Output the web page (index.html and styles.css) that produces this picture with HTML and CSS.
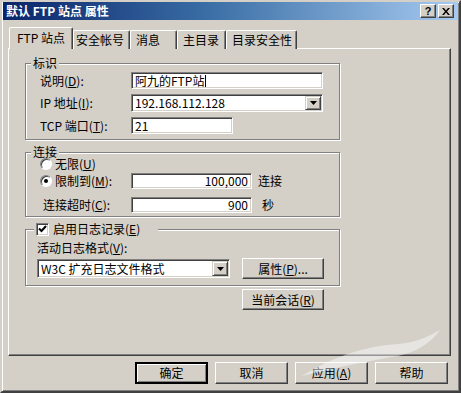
FILE: index.html
```html
<!DOCTYPE html>
<html lang="zh-CN">
<head>
  <meta charset="UTF-8" />
  <title>默认 FTP 站点 属性</title>
  <link rel="stylesheet" href="styles.css">
</head>
<body>
  <div class="window">
    <div class="titlebar">
      <span class="title">默认 FTP 站点 属性</span>
      <div class="caption-btns">
        <span class="cap-btn help">?</span>
        <span class="cap-btn">
          <svg width="8" height="7" viewBox="0 0 8 7"><path d="M0 0h2l2 2.5 2-2.5h2l-3 3.5 3 3.5h-2l-2-2.5-2 2.5h-2l3-3.5z" fill="#000"/></svg>
        </span>
      </div>
    </div>

    <div class="tabs">
      <span class="tab active">FTP 站点</span>
      <span class="tab t2">安全帐号</span>
      <span class="tab t3">消息</span>
      <span class="tab t4">主目录</span>
      <span class="tab t5">目录安全性</span>
    </div>

    <div class="panel">
      <div class="group g-ident">
        <div class="legend">标识</div>
        <div class="row r1">
          <span class="label">说明(<u>D</u>):</span>
          <div class="field w-long">阿九的FTP站<span class="caret"></span></div>
        </div>
        <div class="row r2">
          <span class="label">IP 地址(<u>I</u>):</span>
          <div class="field combo w-long">192.168.112.128<span class="drop-btn"><svg width="7" height="4" viewBox="0 0 7 4"><path d="M0 0h7l-3.5 4z" fill="#000"/></svg></span></div>
        </div>
        <div class="row r2">
          <span class="label">TCP 端口(<u>T</u>):</span>
          <div class="field w-port">21</div>
        </div>
      </div>

      <div class="group g-conn">
        <div class="legend">连接</div>
        <div class="row c1">
          <span class="radio"></span>
          <span>无限(<u>U</u>)</span>
        </div>
        <div class="row c2">
          <span class="label radio-label"><span class="radio on"><span class="dot"></span></span><span>限制到(<u>M</u>):</span></span>
          <div class="field num">100,000</div>
          <span class="unit">连接</span>
        </div>
        <div class="row c3">
          <span class="label timeout">连接超时(<u>C</u>):</span>
          <div class="field num">900</div>
          <span class="unit sec">秒</span>
        </div>
      </div>

      <div class="group g-log">
        <div class="legend check-legend">
          <span class="checkbox"><svg width="9" height="8" viewBox="0 0 9 8"><path d="M1 3.5l2.5 2.5 4.5-5" stroke="#000" stroke-width="2" fill="none"/></svg></span>
          <span>启用日志记录(<u>E</u>)</span>
        </div>
        <div class="row l1">活动日志格式(<u>V</u>):</div>
        <div class="row l2">
          <div class="field combo w-log">W3C 扩充日志文件格式<span class="drop-btn"><svg width="7" height="4" viewBox="0 0 7 4"><path d="M0 0h7l-3.5 4z" fill="#000"/></svg></span></div>
          <span class="btn side-btn">属性(<u>P</u>)...</span>
        </div>
      </div>

      <span class="btn side-btn session">当前会话(<u>R</u>)</span>
    </div>

    <div class="footer">
      <span class="btn default">确定</span>
      <span class="btn">取消</span>
      <span class="btn">应用(<u>A</u>)</span>
      <span class="btn">帮助</span>
    </div>

    <!-- faint site watermark swoosh over the dialog -->
    <svg class="watermark" width="150" height="60" viewBox="0 0 150 60">
      <path d="M4 52 C40 30 70 22 100 20 C115 19 128 14 142 6 C132 20 118 28 100 32 C75 36 45 42 4 52z" fill="#fff" opacity="0.45"/>
    </svg>
  </div>
</body>
</html>
```

FILE: styles.css
```css
body {
  margin: 0;
  background: #d4d0c8;
  font-family: "Noto Sans CJK SC", "Liberation Sans", sans-serif;
  font-size: 12px;
  line-height: 14px;
  color: #000;
}

u {
  text-decoration: underline;
}

.window {
  position: relative;
  width: 461px;
  height: 393px;
  box-sizing: border-box;
  background: #d4d0c8;
  border: 2px solid;
  border-color: #d4d0c8 #404040 #404040 #d4d0c8;
  box-shadow: inset 1px 1px 0 #fff, inset -1px -1px 0 #808080;
  overflow: hidden;
}

/* title bar */
.titlebar {
  margin: 0 1px;
  height: 18px;
  display: flex;
  align-items: center;
  justify-content: space-between;
  padding: 0 4px 0 3px;
  background: linear-gradient(to right, #0a246a, #3a6ea5 45%, #a6caf0);
}

.title {
  color: #fff;
  font-weight: bold;
  font-size: 12px;
}

.caption-btns {
  display: flex;
  gap: 2px;
}

.cap-btn {
  width: 16px;
  height: 14px;
  box-sizing: border-box;
  display: flex;
  align-items: center;
  justify-content: center;
  background: #d4d0c8;
  border: 1px solid;
  border-color: #fff #404040 #404040 #fff;
  box-shadow: inset -1px -1px 0 #808080;
  font-family: "Liberation Sans", sans-serif;
  font-weight: bold;
  font-size: 11px;
  line-height: 12px;
}

/* tabs */
.tabs {
  display: flex;
  align-items: flex-end;
  height: 22px;
  margin: 7px 0 -1px 7px;
}

.tab {
  height: 19px;
  box-sizing: border-box;
  padding-left: 5px;
  line-height: 17px;
  border-top: 1px solid #fff;
  border-left: 1px solid #fff;
  border-right: 1px solid #404040;
  box-shadow: inset -1px 0 0 #808080;
  border-radius: 2px 2px 0 0;
  background: #d4d0c8;
}

.tab.active {
  position: relative;
  z-index: 1;
  width: 64px;
  height: 22px;
  padding-left: 7px;
  line-height: 20px;
}

.t2 { width: 57px; padding-left: 2px; }
.t3 { width: 47px; }
.t4 { width: 49px; }
.t5 { width: 71px; }

/* tab page */
.panel {
  margin-left: 6px;
  width: 443px;
  height: 308px;
  box-sizing: border-box;
  padding-top: 14px;
  border: 1px solid;
  border-color: #fff #404040 #404040 #fff;
  box-shadow: inset -1px -1px 0 #808080;
}

.group {
  margin-left: 16px;
  width: 315px;
  box-sizing: border-box;
  border: 1px solid #808080;
  box-shadow: inset 1px 1px 0 #fff, 1px 1px 0 #fff;
}

.g-ident { height: 77px; }
.g-conn { height: 65px; margin-top: 12px; }
.g-log { height: 57px; margin-top: 12px; }

.legend {
  width: max-content;
  height: 14px;
  margin: -8px 0 0 5px;
  padding: 0 2px;
  background: #d4d0c8;
}

.row {
  display: flex;
  align-items: center;
}

.label {
  width: 91px;
  flex-shrink: 0;
}

.field {
  box-sizing: border-box;
  display: flex;
  align-items: center;
  background: #fff;
  padding: 0 3px;
  border: 1px solid;
  border-color: #808080 #fff #fff #808080;
  box-shadow: inset 1px 1px 0 #404040, inset -1px -1px 0 #d4d0c8;
  white-space: nowrap;
}

.caret {
  width: 1px;
  height: 12px;
  margin-left: 1px;
  background: #000;
}

.combo {
  padding: 1px 1px 1px 3px;
}

.drop-btn {
  margin-left: auto;
  width: 16px;
  height: 100%;
  box-sizing: border-box;
  display: flex;
  align-items: center;
  justify-content: center;
  background: #d4d0c8;
  border: 1px solid;
  border-color: #d4d0c8 #404040 #404040 #d4d0c8;
  box-shadow: inset 1px 1px 0 #fff, inset -1px -1px 0 #808080;
}

/* identification group */
.g-ident .row { padding-left: 14px; }
.r1 { margin-top: 2px; height: 17px; }
.r1 .field { height: 17px; }
.r2 { margin-top: 5px; }
.r2 .field { height: 18px; }
.r2 + .r2 .field { height: 17px; }
.w-long { width: 192px; }
.w-port { width: 102px; }

/* connection group */
.g-conn .row { padding-left: 14px; }
.c1 { margin-top: -2px; height: 14px; gap: 3px; }
.c2 { margin-top: 2px; }
.c3 { margin-top: 8px; }
.num {
  width: 121px;
  height: 16px;
  justify-content: flex-end;
}
.unit { margin-left: 6px; }
.unit.sec { margin-left: 10px; }
.timeout { padding-left: 3px; box-sizing: border-box; }
.radio-label {
  display: flex;
  align-items: center;
  gap: 3px;
}

.radio {
  width: 12px;
  height: 12px;
  box-sizing: border-box;
  display: inline-flex;
  align-items: center;
  justify-content: center;
  border-radius: 50%;
  background: #fff;
  border: 1px solid;
  border-color: #808080 #fff #fff #808080;
  box-shadow: inset 1px 1px 0 #404040;
}

.dot {
  width: 4px;
  height: 4px;
  border-radius: 50%;
  background: #000;
}

/* logging group */
.check-legend {
  display: flex;
  align-items: center;
  gap: 4px;
  margin-left: 8px;
  padding-right: 18px;
}

.checkbox {
  width: 13px;
  height: 13px;
  box-sizing: border-box;
  display: flex;
  align-items: center;
  justify-content: center;
  background: #fff;
  border: 1px solid;
  border-color: #808080 #fff #fff #808080;
  box-shadow: inset 1px 1px 0 #404040, inset -1px -1px 0 #d4d0c8;
}

.l1 { margin-top: 5px; height: 14px; padding-left: 11px; }
.l2 { margin-top: 3px; height: 21px; padding-left: 11px; }
.w-log { width: 193px; height: 19px; }

/* buttons */
.btn {
  height: 22px;
  box-sizing: border-box;
  display: flex;
  align-items: center;
  justify-content: center;
  background: #d4d0c8;
  border: 1px solid;
  border-color: #fff #404040 #404040 #fff;
  box-shadow: inset -1px -1px 0 #808080;
}

.side-btn {
  width: 82px;
  height: 21px;
  margin-left: 12px;
}

.session {
  margin: 3px 0 0 233px;
}

.footer {
  display: flex;
  justify-content: flex-end;
  gap: 7px;
  margin-top: 6px;
  padding-right: 11px;
}

.footer .btn {
  width: 73px;
}

.btn.default {
  border: 2px solid #000;
  box-shadow: inset 1px 1px 0 #fff, inset -1px -1px 0 #808080;
}

.watermark {
  position: absolute;
  left: 296px;
  top: 322px;
  pointer-events: none;
}
```
